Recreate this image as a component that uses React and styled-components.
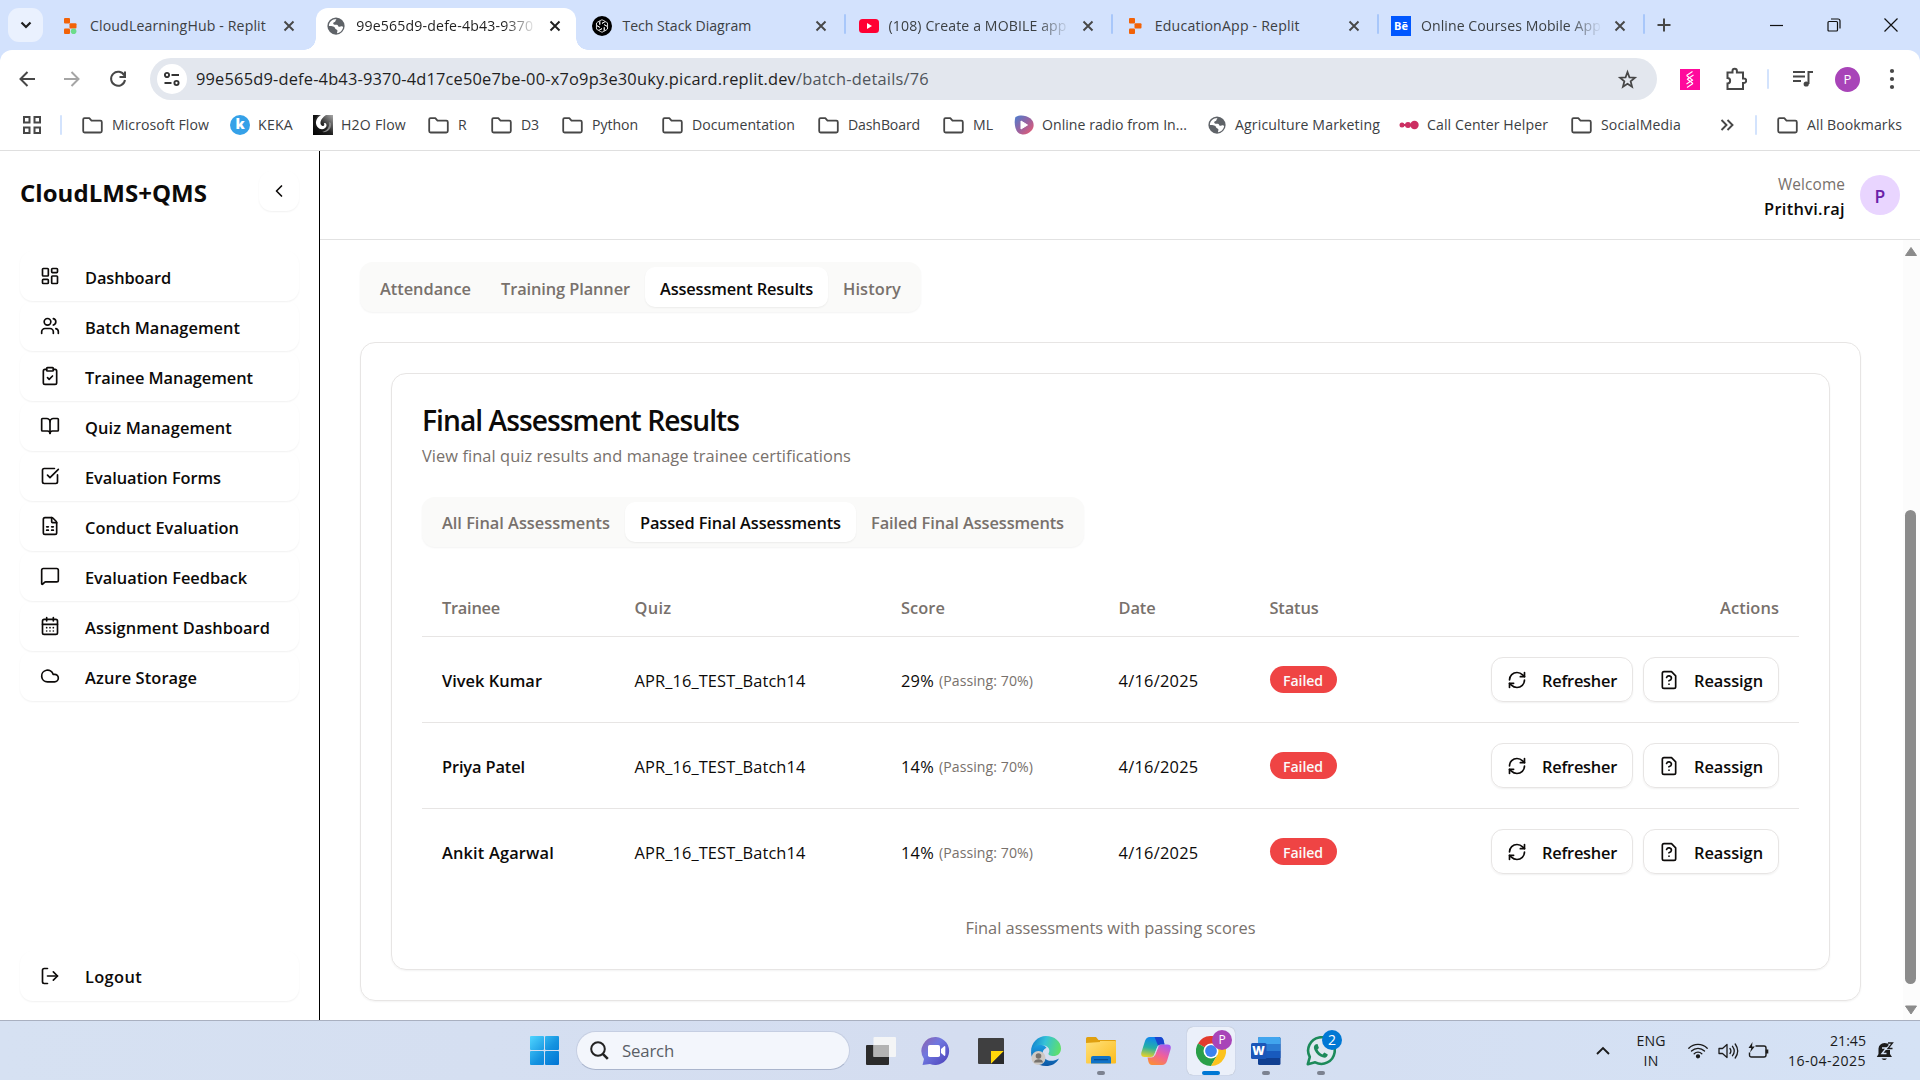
import React, { useLayoutEffect, useRef } from "react";
import styled, { createGlobalStyle, css } from "styled-components";
import {
  LayoutDashboard, Users, ClipboardCheck, BookOpen, SquareCheckBig, FileSpreadsheet,
  MessageSquare, CalendarDays, Cloud, LogOut, RefreshCw, ChevronLeft,
} from "lucide-react";

const Global = createGlobalStyle`
  * { box-sizing: border-box; }
  html, body { margin: 0; padding: 0; overflow: hidden; background: #fff; }
  body { font-family: "Open Sans", "Noto Sans", sans-serif; color: #0c0a09; }
  svg { display: block; flex: none; }
`;

/* Text whose tracking is tuned so that it fills a given width. */
const TextBox = styled.span`
  display: inline-block;
  white-space: pre;
  font-size: ${(p) => p.$size}px;
  font-weight: ${(p) => p.$weight};
  color: ${(p) => p.$color};
  line-height: ${(p) => p.$lh}px;
  flex: none;
`;

function T({ w, size = 16.4, weight = 400, color = "inherit", lh = 24, children, className }) {
  const ref = useRef(null);
  useLayoutEffect(() => {
    const el = ref.current;
    if (!w || !el) return;
    el.style.letterSpacing = "0px";
    const natural = el.getBoundingClientRect().width;
    const spacing = (w - natural) / el.textContent.length;
    el.style.letterSpacing = `${spacing.toFixed(3)}px`;
  }, [w, children]);
  return (
    <TextBox ref={ref} className={className} $size={size} $weight={weight} $color={color} $lh={lh}>
      {children}
    </TextBox>
  );
}

const Screen = styled.div`
  width: 1920px;
  height: 1080px;
  display: flex;
  flex-direction: column;
  overflow: hidden;
`;

/* ---------- browser tab strip ---------- */
const TabStrip = styled.div`
  height: 50px;
  background: #d3e2fd;
  display: flex;
  align-items: flex-start;
  padding: 8px 0 0 8px;
`;
const TabSearch = styled.div`
  width: 35px;
  height: 34px;
  border-radius: 11px;
  background: #eaf1fe;
  display: grid;
  place-items: center;
  margin-right: 7px;
`;
const TabSlot = styled.div`
  width: 266.2px;
  height: 42px;
  display: flex;
  align-items: flex-start;
`;
const TabBody = styled.div`
  position: relative;
  width: 260px;
  height: 42px;
  display: flex;
  align-items: center;
  padding: 0 0 7px 10px;
  border-radius: 12px 12px 0 0;
  ${(p) => p.$active && css`
    background: #fff;
    &::before, &::after {
      content: "";
      position: absolute;
      bottom: 0;
      width: 12px;
      height: 12px;
    }
    &::before { left: -12px; background: radial-gradient(circle at 0 0, transparent 11.5px, #fff 12px); }
    &::after { right: -12px; background: radial-gradient(circle at 100% 0, transparent 11.5px, #fff 12px); }
  `}
`;
const Fav = styled.div`
  width: 20px;
  height: 20px;
  display: grid;
  place-items: center;
  margin-right: ${(p) => p.$gap ?? 10}px;
  flex: none;
`;
const TabTitle = styled.div`
  width: 180px;
  margin-right: 13px;
  height: 24px;
  color: ${(p) => (p.$active ? "#1f1f1f" : "#3c4043")};
  ${(p) => p.$fade && css`mask-image: linear-gradient(90deg, #000 148px, transparent 181px);`}
`;
const TabSep = styled.div`
  width: 2px;
  height: 20px;
  margin: 6px 0 0 2px;
  border-radius: 1px;
  background: #a8c7fa;
`;
const NewTab = styled.div`
  width: 34px;
  height: 34px;
  display: grid;
  place-items: center;
`;
const WindowButtons = styled.div`
  margin-left: auto;
  display: flex;
  height: 34px;
  align-items: center;
  padding-right: 1px;
`;
const WinBtn = styled.div`
  width: 57px;
  display: grid;
  place-items: center;
`;

/* ---------- toolbar ---------- */
const ToolbarBack = styled.div`
  background: #d3e2fd;
  height: 58px;
`;
const Toolbar = styled.div`
  background: #fff;
  height: 58px;
  border-radius: 12px 12px 0 0;
  display: flex;
  align-items: center;
  padding-left: 17px;
`;
const ToolIcon = styled.div`
  width: ${(p) => p.$w ?? 20}px;
  margin-right: ${(p) => p.$mr ?? 0}px;
  display: grid;
  place-items: center;
  flex: none;
`;
const Omnibox = styled.div`
  width: 1507px;
  height: 42px;
  border-radius: 21px;
  background: #e3e7ee;
  display: flex;
  align-items: center;
  padding: 0 19px 0 7px;
`;
const SiteInfo = styled.div`
  width: 30px;
  height: 30px;
  border-radius: 50%;
  background: #fff;
  display: grid;
  place-items: center;
  margin-right: 9px;
`;
const Push = styled.div`
  flex: 1;
`;
const Divider = styled.div`
  width: 2px;
  height: 20px;
  border-radius: 1px;
  background: #d3e3fd;
  margin-right: ${(p) => p.$mr ?? 0}px;
`;
const Extension = styled.div`
  margin-left: 23px;
`;
const Profile = styled.div`
  width: 25px;
  height: 25px;
  border-radius: 50%;
  background: #a844b8;
  color: #fff;
  display: grid;
  place-items: center;
  margin-right: 20px;
`;

/* ---------- bookmarks ---------- */
const Bookmarks = styled.div`
  height: 43px;
  display: flex;
  align-items: center;
  padding: 0 0 8px 22px;
  border-bottom: 1px solid #dfdfdf;
  background: #fff;
  color: #3c4043;
`;
const Bookmark = styled.div`
  width: ${(p) => p.$w}px;
  display: flex;
  align-items: center;
  flex: none;
  white-space: nowrap;
`;
const Keka = styled.div`
  width: 20px;
  height: 20px;
  border-radius: 50%;
  background: #35a1e8;
  color: #fff;
  font-size: 14px;
  font-weight: 800;
  line-height: 18px;
  text-align: center;
`;
const Behance = styled.div`
  width: 20px;
  height: 20px;
  background: #0057ff;
  color: #fff;
  font-size: 11px;
  font-weight: 700;
  line-height: 20px;
  text-align: center;
`;

/* ---------- application ---------- */
const AppArea = styled.div`
  height: 869px;
  display: flex;
  background: #fff;
  ${TextBox} { padding-top: 2px; }
`;
const Sidebar = styled.aside`
  width: 320px;
  border-right: 1.5px solid #000;
  padding: 20px 20px 19px;
  display: flex;
  flex-direction: column;
`;
const SideHead = styled.div`
  display: flex;
  justify-content: space-between;
  width: 279px;
  height: 80px;
`;
const Brand = styled.div`
  padding-top: 3px;
`;
const SoftBox = css`
  border-radius: 13px;
  box-shadow: 0 1px 2px rgba(0, 0, 0, 0.06);
`;
const Collapse = styled.div`
  ${SoftBox}
  width: 40px;
  height: 40px;
  display: grid;
  place-items: center;
`;
const NavItem = styled.div`
  ${SoftBox}
  width: 279px;
  height: 50px;
  flex: none;
  display: flex;
  align-items: center;
  padding-left: 20px;
  svg { margin: 0 25px 0 0; }
  ${TextBox} { padding-top: 4px; }
`;
const LogoutItem = styled(NavItem)`
  svg { margin-bottom: 1px; }
  ${TextBox} { padding-top: 2px; }
`;
const Main = styled.main`
  flex: 1;
  display: flex;
  flex-direction: column;
`;
const TopBar = styled.header`
  height: 89px;
  border-bottom: 1px solid #e2e2e2;
  display: flex;
  justify-content: flex-end;
  align-items: center;
  padding-right: 20px;
  gap: 15px;
`;
const Who = styled.div`
  display: flex;
  flex-direction: column;
  align-items: flex-end;
`;
const Avatar = styled.div`
  width: 40px;
  height: 40px;
  border-radius: 50%;
  background: #e9d5ff;
  display: grid;
  place-items: center;
`;
const Body = styled.div`
  flex: 1;
  display: flex;
`;
const Content = styled.div`
  width: 1583px;
  padding: 22px 0 0 40px;
`;
const Scroll = styled.div`
  width: 17px;
  background: #fcfcfc;
  display: flex;
  flex-direction: column;
  align-items: center;
  padding: 7px 2px 4px 0;
`;
const Thumb = styled.div`
  width: 11px;
  height: 474px;
  border-radius: 6px;
  background: #8b8b8b;
  margin: 254px 0 21px;
`;
const Segments = styled.div`
  display: inline-flex;
  flex: none;
  height: 50px;
  padding: 5px;
  border-radius: 13px;
  background: #fafaf9;
  box-shadow: 0 1px 2px rgba(0, 0, 0, 0.05);
  vertical-align: top;
  ${TextBox} { padding-top: ${(p) => p.$drop ?? 2}px; }
`;
const Segment = styled.div`
  height: 40px;
  padding: 0 15px;
  display: flex;
  align-items: center;
  border-radius: 10px;
  color: ${(p) => (p.$active ? "#0c0a09" : "#78716c")};
  ${(p) => p.$active && css`
    background: #fff;
    box-shadow: 0 1px 2px rgba(0, 0, 0, 0.06);
  `}
`;
const Card = styled.section`
  width: ${(p) => p.$w}px;
  height: ${(p) => p.$h}px;
  margin-top: ${(p) => p.$mt ?? 0}px;
  border: 1px solid #e7e5e4;
  border-radius: 15px;
  padding: 30px;
  box-shadow: 0 1px 2px rgba(0, 0, 0, 0.05);
  display: flex;
  flex-direction: column;
  align-items: flex-start;
  flex: none;
`;
const Title = styled.div`
  height: 39px;
  flex: none;
`;
const Subtitle = styled.div`
  height: 54px;
  flex: none;
`;
const Row = styled.div`
  width: 1377px;
  height: ${(p) => p.$h}px;
  flex: none;
  display: grid;
  grid-template-columns: 192.5px 266.5px 217.5px 151px 1fr auto;
  align-items: center;
  padding: 0 20px;
  border-bottom: ${(p) => (p.$last ? "0" : "1px solid #e7e5e4")};
  margin-top: ${(p) => p.$mt ?? 0}px;
`;
const Cell = styled.div`
  display: flex;
  align-items: center;
  gap: ${(p) => p.$gap ?? 5}px;
`;
const Badge = styled.div`
  width: 67px;
  height: 27px;
  border-radius: 14px;
  background: #ef4444;
  color: #fafaf9;
  display: flex;
  justify-content: center;
  align-items: center;
`;
const Action = styled.div`
  width: ${(p) => p.$w}px;
  height: 45px;
  border: 1px solid #e7e5e4;
  border-radius: 12px;
  box-shadow: 0 1px 2px rgba(0, 0, 0, 0.06);
  display: flex;
  align-items: center;
  padding-left: 15px;
  gap: 15px;
`;
const Caption = styled.div`
  width: 100%;
  margin-top: 20px;
  flex: none;
  display: flex;
  justify-content: center;
`;

/* ---------- taskbar ---------- */
const Taskbar = styled.div`
  height: 60px;
  border-top: 1px solid #a9b0c0;
  background: linear-gradient(90deg, #d6e1f2, #d4ddf0 50%, #d5e2f5);
  display: flex;
  align-items: center;
  padding-left: 530px;
`;
const SearchBox = styled.div`
  width: 274px;
  height: 39px;
  border-radius: 20px;
  background: #f3f6fc;
  border: 1px solid #c5cee2;
  border-bottom-color: #aab5cd;
  display: flex;
  align-items: center;
  padding-left: 13px;
  gap: 13px;
  margin: 0 7px 0 17px;
`;
const TaskItem = styled.div`
  position: relative;
  width: 48px;
  height: 48px;
  margin-right: 7px;
  display: grid;
  place-items: center;
  border-radius: 6px;
  ${(p) => p.$active && css`background: #ebf0fa; box-shadow: 0 0 1px rgba(0, 0, 0, 0.3);`}
`;
const Running = styled.div`
  position: absolute;
  bottom: 0;
  left: ${(p) => (p.$wide ? 15 : 20)}px;
  width: ${(p) => (p.$wide ? 18 : 8)}px;
  height: 4px;
  border-radius: 2px;
  background: ${(p) => (p.$wide ? "#0078d4" : "#7c8290")};
`;
const Bubble = styled.div`
  position: absolute;
  top: 3px;
  right: 3px;
  width: 20px;
  height: 20px;
  border-radius: 50%;
  background: ${(p) => p.$bg};
  color: #fff;
  font-size: ${(p) => p.$fs}px;
  line-height: 20px;
  text-align: center;
`;
const Tray = styled.div`
  margin-left: auto;
  display: flex;
  align-items: center;
  color: #1b1b1b;
  padding-right: 20px;
`;
const Stack = styled.div`
  width: ${(p) => p.$w}px;
  margin-right: ${(p) => p.$mr}px;
  display: flex;
  flex-direction: column;
  align-items: ${(p) => p.$align};
`;
const TrayIcon = styled.div`
  width: 30px;
  margin-right: ${(p) => p.$mr ?? 0}px;
  display: grid;
  place-items: center;
`;

/* ---------- drawings ---------- */
const Cross = ({ c = "#474747" }) => (
  <svg width="12" height="12" viewBox="0 0 12 12" stroke={c} strokeWidth="1.9"><path d="M1.5 1.5l9 9M10.5 1.5l-9 9" /></svg>
);
const Replit = ({ green }) => (
  <svg width="20" height="20" viewBox="0 0 20 20" fill="#f26207">
    <rect x="4" y="2" width="6" height="5.6" rx="1" /><rect x="9.5" y="7.2" width="7" height="5.4" rx="1" />
    <rect x="4" y="12.4" width="6" height="5.6" rx="1" />
    {green && <circle cx="13.6" cy="15.3" r="2.8" fill="#6bdc8b" />}
  </svg>
);
const Globe = () => (
  <svg width="18" height="18" viewBox="0 0 24 24">
    <circle cx="12" cy="12" r="11.5" fill="#5f6368" />
    <path fill="#fff" d="M13 2.5c-2 1.5-1 3.5-3.500 4.500-2 .8-1.500 3 .5 3.200 2.200.2 4.200-.4 4.700 1.500.3 1.500 2 1.500 3.300 1 1.500-.7 3-.3 3.500.5C21 17.500 17.500 21 13.500 21.700c-.5-1.500.8-2.200.3-4-.5-1.500-3-1.200-3.200-3.200-.2-2-3.600-2.500-8-2.500C2.300 7 6.500 2.500 13 2.500z" />
    <path fill="#5f6368" d="M12 3.500c3-1 8 2 9 6.500-1.500-1.500-3 .5-4.500-.5-1.300-1-1-2.500-2.500-3-1.500-.3-2.500-1.500-2-3z" />
  </svg>
);
const OpenAI = () => (
  <svg width="20" height="20" viewBox="0 0 20 20">
    <circle cx="10" cy="10" r="10" fill="#000" />
    <g fill="none" stroke="#fff" strokeWidth="0.85" transform="translate(10 10) scale(.93) translate(-10 -10)">
      {[0, 60, 120, 180, 240, 300].map((a) => (
        <path key={a} transform={`rotate(${a} 10 10)`} d="M7.600 8.600V5.700a2.300 2.300 0 0 1 3.600-1.900l2.600 1.500M10 7.200l2.600-1.500" />
      ))}
    </g>
  </svg>
);
const YouTube = () => (
  <svg width="20" height="16" viewBox="0 0 20 16"><rect y="1" width="20" height="14" rx="3.500" fill="#ff0033" /><path d="M8 5l5 3-5 3z" fill="#fff" /></svg>
);
const Folder = () => (
  <svg width="21" height="17" viewBox="0 0 21 17" fill="none" stroke="#474747" strokeWidth="1.800" strokeLinejoin="round">
    <path d="M1.200 2.500q0-1.300 1.300-1.300h4.800l2.200 2.400h8.800q1.500 0 1.500 1.400v9q0 1.500-1.500 1.500H2.600q-1.400 0-1.400-1.500z" />
  </svg>
);
const H2O = () => (
  <svg width="20" height="20" viewBox="0 0 20 20">
    <defs><linearGradient id="h2o" x1="0" x2="1" y1="1" y2="0"><stop stopColor="#000" /><stop offset=".5" stopColor="#222" /><stop offset="1" stopColor="#aaa" /></linearGradient></defs>
    <rect width="20" height="20" fill="url(#h2o)" />
    <path d="M8 0C3 3 1.500 8 4.500 12c3 3.500 8 2.500 9-1 .3-2.500-1.500-3.500-2.500-2.500.8 1.500 0 3-1.500 2.500C6 9.500 7 4 13 0z" fill="#fff" />
    <path d="M0 0h6C2 2 0 6 0 9z" fill="#111" /><path d="M16 7c1 5-2 9-7 10 5 1 10-3 9-9z" fill="#888" />
  </svg>
);
const Radio = () => (
  <svg width="20" height="20" viewBox="0 0 20 20">
    <defs><linearGradient id="rad" x1="0" x2="1" y1="0" y2="1"><stop stopColor="#4a7fd0" /><stop offset=".5" stopColor="#9a62a0" /><stop offset="1" stopColor="#f25a6b" /></linearGradient></defs>
    <path d="M1.500 2C5-.3 12-.2 16.500 3.500c4 3.500 4 8.500 1 12C13.500 20 8.500 20.500 4.500 18 .5 15 0 6 1.500 2z" fill="url(#rad)" /><path d="M7 6v8l6.500-4z" fill="#fff" stroke="#fff" strokeLinejoin="round" />
  </svg>
);
const CallCenter = () => (
  <svg width="20" height="20" viewBox="0 0 20 20" fill="#cc2f62"><circle cx="3" cy="10" r="2.500" /><circle cx="9" cy="10" r="3" /><circle cx="15.500" cy="10" r="4.200" /><rect x="3" y="9" width="12" height="2" /></svg>
);
const FileQuestion = () => (
  <svg width="20" height="20" viewBox="0 0 24 24" fill="none" stroke="currentColor" strokeWidth="2" strokeLinecap="round" strokeLinejoin="round">
    <path d="M12 17h.01" /><path d="M15 2H6a2 2 0 0 0-2 2v16a2 2 0 0 0 2 2h12a2 2 0 0 0 2-2V7z" /><path d="M9.100 9a3 3 0 0 1 5.820 1c0 2-3 3-3 3" />
  </svg>
);
const Stroke = ({ w = 20, h = 20, sw = 2, c = "#474747", d, vb }) => (
  <svg width={w} height={h} viewBox={vb ?? `0 0 ${w} ${h}`} fill="none" stroke={c} strokeWidth={sw}><path d={d} /></svg>
);
const WinLogo = () => (
  <svg width="29" height="29" viewBox="0 0 29 29">
    <defs><linearGradient id="win" x1="0" y1="0" x2="29" y2="29" gradientUnits="userSpaceOnUse"><stop stopColor="#4fd5ff" /><stop offset=".55" stopColor="#1593e0" /><stop offset="1" stopColor="#0074d4" /></linearGradient></defs>
    <g fill="url(#win)"><rect width="14" height="14" rx="1" /><rect x="15" width="14" height="14" rx="1" /><rect y="15" width="14" height="14" rx="1" /><rect x="15" y="15" width="14" height="14" rx="1" /></g>
  </svg>
);
const TaskView = () => (
  <svg width="30" height="28" viewBox="0 0 30 28"><rect y="8" width="23" height="20" rx="1" fill="#2b2b2b" /><rect x="7.500" y="0" width="22.500" height="20" rx="1" fill="#f5f5f5" opacity=".95" /><rect x="7.500" y="8" width="15.500" height="12" fill="#b3b3b3" /></svg>
);
const Chat = () => (
  <svg width="30" height="30" viewBox="0 0 30 30">
    <defs><linearGradient id="chat" x1="0" x2="1" y1="0" y2="1"><stop stopColor="#9161a9" /><stop offset=".4" stopColor="#7078e0" /><stop offset="1" stopColor="#4b3fb8" /></linearGradient></defs>
    <path d="M15 1a14 14 0 1 1-6 27l-7.500 1 1.500-6A14 14 0 0 1 15 1z" fill="url(#chat)" />
    <rect x="7" y="9" width="12" height="12" rx="1.800" fill="#fff" /><path d="M20 13l3.500-3q.8 0 .8 1v8q0 1-.8 1L20 17z" fill="#fff" />
  </svg>
);
const Sticky = () => (
  <svg width="26" height="26" viewBox="0 0 26 26"><rect width="26" height="26" rx="1" fill="#3f3f40" /><path d="M13 26V13h13z" fill="#ffd60a" /><path d="M13 26L26 13v13z" fill="#29292b" /></svg>
);
const Edge = () => (
  <svg width="30" height="30" viewBox="0 0 30 30">
    <defs>
      <linearGradient id="edge1" x1="0" x2="1" y1=".3" y2=".5"><stop stopColor="#0f7fce" /><stop offset=".45" stopColor="#35c1d8" /><stop offset="1" stopColor="#5fe06a" /></linearGradient>
      <linearGradient id="edge2" x1="0" x2="0" y1="0" y2="1"><stop stopColor="#1b9de2" /><stop offset="1" stopColor="#0c56a4" /></linearGradient>
    </defs>
    <path d="M15 0c8.500 0 15 5.500 15 12.500 0 5-3.500 7.500-7.500 7.500-3.500 0-5.500-1.200-5-2.500 2-3 .5-7.500-5-8C7 9 2 12 0 16 0 6.500 7 0 15 0z" fill="url(#edge1)" />
    <path d="M0 16C1.500 10.500 6 8.500 10.500 9c3.500.4 5 2.500 5 3-4 1-5 6-2.500 9.500 3 4 9 4.500 15 1-2.500 5-7.500 7.500-13 7.500C6.500 30 0 24 0 16z" fill="url(#edge2)" />
    <circle cx="7.500" cy="22" r="7" fill="#cfcac5" /><circle cx="7.500" cy="20" r="2.800" fill="#77726d" /><path d="M3 26.500c0-4.500 9-4.500 9 0z" fill="#77726d" />
  </svg>
);
const Explorer = () => (
  <svg width="30" height="27" viewBox="0 0 30 27">
    <defs><linearGradient id="exp" x1="0" x2="1" y1="0" y2="1"><stop stopColor="#ffe07a" /><stop offset="1" stopColor="#fcbc1d" /></linearGradient></defs>
    <path d="M0 1.500Q0 0 1.500 0H10l2.500 3H29q1 0 1 1v6H0z" fill="#e0a010" /><rect y="4" width="30" height="22.500" rx="1" fill="url(#exp)" />
    <path d="M0 6V3.800h12L14 3v2z" fill="#e0a010" />
    <path d="M5 26.500V21q0-2 2-2h16q2 0 2 2v5.500z" fill="#1173c7" /><rect x="8" y="22" width="14" height="1.300" fill="#0a4f93" />
  </svg>
);
const Copilot = () => (
  <svg width="30" height="28" viewBox="0 0 30 28">
    <defs>
      <linearGradient id="cp1" x1=".3" x2=".1" y1="0" y2="1"><stop stopColor="#0e86ee" /><stop offset=".5" stopColor="#25b0a4" /><stop offset="1" stopColor="#f4d31f" /></linearGradient>
      <linearGradient id="cp2" x1=".8" x2=".3" y1="0" y2="1"><stop stopColor="#a45cf2" /><stop offset=".5" stopColor="#f0609b" /><stop offset="1" stopColor="#fb8c3c" /></linearGradient>
    </defs>
    <path d="M9 0h10q2.500 0 3.500 3l1 4.500h-4q-2.500 0-3.300 2.500L13 18q-.8 2-3 2H3.500Q-.8 20 .5 15L4 4Q5.300 0 9 0z" fill="url(#cp1)" />
    <path d="M13.500 0H19q2.500 0 3.500 3l1 4.500h-4q-1.500 0-2.500 1z" fill="#1a44cf" />
    <path d="M21 28H11q-2.500 0-3.500-3l-1-4.500h4q2.500 0 3.300-2.500L17 10q.8-2.500 3-2.500h6.500q4.300 0 3 5L26 24q-1.300 4-5 4z" fill="url(#cp2)" />
    <path d="M16.500 9.500l-3.300 9h.8l3.600-9z" fill="#d4ddf0" />
  </svg>
);
const Chrome = () => (
  <svg width="30" height="30" viewBox="0 0 30 30">
    <path d="M15 15L2 7.500A15 15 0 0 1 28 7.500z" fill="#e33b2e" /><path d="M15 15V0a15 15 0 0 1 13 7.500H15z" fill="#e33b2e" />
    <path d="M15 15L2 7.500A15 15 0 0 0 15 30l6.500-11.250z" fill="#2a9f48" /><path d="M15 7.500h13A15 15 0 0 1 15 30l6.500-11.250z" fill="#fcc31e" />
    <circle cx="15" cy="15" r="7.500" fill="#fff" /><circle cx="15" cy="15" r="5.900" fill="#3b82f0" />
  </svg>
);
const Word = () => (
  <svg width="30" height="28" viewBox="0 0 30 28">
    <rect x="7" width="22.500" height="28" rx="1.500" fill="#103f91" /><path d="M7 1.500Q7 0 8.500 0H28q1.500 0 1.500 1.500V7H7z" fill="#41a5ee" /><rect x="7" y="7" width="22.500" height="7" fill="#2b7cd3" /><rect x="7" y="14" width="22.500" height="7" fill="#185abd" />
    <rect y="6" width="15.500" height="16" rx="1.500" fill="#1a56b8" />
    <text x="7.600" y="18.300" fontSize="12" fontWeight="800" fill="#fff" textAnchor="middle" fontFamily="Open Sans">W</text>
  </svg>
);
const WhatsApp = () => (
  <svg width="30" height="30" viewBox="0 0 30 30">
    <path d="M1.800 28.200l2-7.200A13.300 13.300 0 1 1 9.200 26.300z" fill="#dfe8f0" stroke="#1c8a5a" strokeWidth="2.600" strokeLinejoin="round" />
    <path d="M10 8.200c-2 .8-2.800 3-1.500 5.800 1.800 4 5 6.600 8.800 7.600 2.500.6 4.200-.8 4.500-3l-3.500-2-1.800 1.800c-2.500-1-4.200-2.800-5-4.800l1.400-1.700L11.500 8z" fill="#1c8a5a" />
  </svg>
);

/* ---------- data ---------- */
const tabs = [
  { icon: <Replit green />, title: "CloudLearningHub - Replit", w: 176 },
  { icon: <Globe />, title: "99e565d9-defe-4b43-9370", w: 177, active: true, fade: true },
  { icon: <OpenAI />, title: "Tech Stack Diagram", w: 129, sep: true },
  { icon: <YouTube />, title: "(108) Create a MOBILE app", w: 178, fade: true, sep: true },
  { icon: <Replit />, title: "EducationApp - Replit", w: 145, sep: true },
  { icon: <Behance>Bē</Behance>, title: "Online Courses Mobile App", w: 180, fade: true, sep: true },
];
const bookmarks = [
  ["Microsoft Flow", 97, 148], ["KEKA", 35, 83, <Keka>k</Keka>], ["H2O Flow", 65, 115, <H2O />], ["R", 9, 63],
  ["D3", 18, 71], ["Python", 46, 100], ["Documentation", 103, 156], ["DashBoard", 72, 125], ["ML", 20, 71],
  ["Online radio from In...", 145, 193, <Radio />], ["Agriculture Marketing", 145, 192, <Globe />],
  ["Call Center Helper", 121, 172, <CallCenter />], ["SocialMedia", 80, 148],
];
const nav = [
  [LayoutDashboard, "Dashboard", 86], [Users, "Batch Management", 155], [ClipboardCheck, "Trainee Management", 168],
  [BookOpen, "Quiz Management", 147], [SquareCheckBig, "Evaluation Forms", 136], [FileSpreadsheet, "Conduct Evaluation", 154],
  [MessageSquare, "Evaluation Feedback", 162], [CalendarDays, "Assignment Dashboard", 185], [Cloud, "Azure Storage", 112],
];
const mainTabs = [["Attendance", 91], ["Training Planner", 129], ["Assessment Results", 153, true], ["History", 58]];
const resultTabs = [["All Final Assessments", 168], ["Passed Final Assessments", 201, true], ["Failed Final Assessments", 193]];
const rows = [["Vivek Kumar", 100, "29%"], ["Priya Patel", 83, "14%"], ["Ankit Agarwal", 112, "14%"]];

const Segmented = ({ items, drop }) => (
  <Segments $drop={drop}>
    {items.map(([label, w, active]) => (
      <Segment key={label} $active={active}><T w={w} weight={550}>{label}</T></Segment>
    ))}
  </Segments>
);

export default function App() {
  return (
    <Screen>
      <Global />
      <TabStrip>
        <TabSearch><Stroke w={12} h={12} sw={2.2} c="#1f1f1f" d="M1.500 3.500L6 8l4.500-4.500" /></TabSearch>
        {tabs.map((t) => (
          <TabSlot key={t.title}>
            <TabBody $active={t.active}>
              <Fav>{t.icon}</Fav>
              <TabTitle $active={t.active} $fade={t.fade}><T w={t.w} size={14.1}>{t.title}</T></TabTitle>
              <Cross c={t.active ? "#1f1f1f" : "#474747"} />
            </TabBody>
            {t.sep && <TabSep />}
          </TabSlot>
        ))}
        <NewTab><Stroke w={14} h={14} d="M7 .5v13M.5 7h13" /></NewTab>
        <WindowButtons>
          <WinBtn><Stroke w={13} h={13} sw={1.2} c="#111" d="M0 6.500h13" /></WinBtn>
          <WinBtn><Stroke w={14} h={14} sw={1.200} c="#111" d="M1 4.500q0-1 1-1h7.500q1 0 1 1V12q0 1-1 1H2q-1 0-1-1zM4 1h7q2 0 2 2v7.500" /></WinBtn>
          <WinBtn><Stroke w={14} h={14} sw={1.200} c="#111" d="M.5.5l13 13M13.500.5l-13 13" /></WinBtn>
        </WindowButtons>
      </TabStrip>

      <ToolbarBack>
        <Toolbar>
          <ToolIcon $mr={25}><Stroke w={18} h={18} d="M9.500 2L2.500 9l7 7M2.500 9H17" /></ToolIcon>
          <ToolIcon $mr={26}><Stroke w={18} h={18} c="#a5a5a5" d="M8.500 2l7 7-7 7M15.500 9H1" /></ToolIcon>
          <ToolIcon $mr={22}><Stroke w={18} h={18} d="M15.300 5.500A7 7 0 1 0 16 10M16 1.500V7h-5.500" /></ToolIcon>
          <Omnibox>
            <SiteInfo>
              <svg width="18" height="16" viewBox="0 0 18 16" fill="none" stroke="#333" strokeWidth="1.900"><circle cx="4" cy="4" r="2.100" /><path d="M8.500 4H16M1.500 12h7" /><circle cx="13.500" cy="12" r="2.100" /></svg>
            </SiteInfo>
            <T w={600} color="#1f1f1f" lh={26}>99e565d9-defe-4b43-9370-4d17ce50e7be-00-x7o9p3e30uky.picard.replit.dev</T>
            <T w={133} color="#50555b" lh={26}>/batch-details/76</T>
            <Push />
            <Stroke w={21} h={21} vb="0 0 24 24" d="M12 3.500l2.200 6 6.300.4-4.900 4.100 1.600 6.200L12 16.800l-5.200 3.400L8.400 14 3.500 9.900l6.300-.4z" />
          </Omnibox>
          <Extension>
            <svg width="20" height="21" viewBox="0 0 20 21"><rect width="20" height="21" fill="#ff0a9c" /><path d="M12.500 2.500l-6 4M13.500 6l-6 4M6.500 6.500l6.500 5M7 10l6 4.500M12.500 11l-6 4M13 14.500l-6 4" stroke="#fff" strokeWidth="1.100" fill="none" /></svg>
          </Extension>
          <Push />
          <ToolIcon $w={22} $mr={20}>
            <Stroke w={22} h={24} d="M2.500 5.500h5V4a2.200 2.200 0 0 1 4.400 0v1.500H18v6h1a2.200 2.200 0 0 1 0 4.400h-1V22H2.500v-5.500c3.500 0 3.500-5.500 0-5.500z" />
          </ToolIcon>
          <Divider $mr={24} />
          <ToolIcon $w={20} $mr={22}>
            <svg width="20" height="18" viewBox="0 0 20 18" fill="none" stroke="#474747" strokeWidth="2"><path d="M0 2h12M0 6.500h12M0 11h8M15.500 14V2H20" /><circle cx="13.200" cy="14" r="2.600" fill="#474747" stroke="none" /></svg>
          </ToolIcon>
          <Profile><T size={13} lh={25}>P</T></Profile>
          <ToolIcon $w={24} $mr={16}>
            <svg width="6" height="22" viewBox="0 0 6 22" fill="#474747"><circle cx="3" cy="3" r="2.100" /><circle cx="3" cy="11" r="2.100" /><circle cx="3" cy="19" r="2.100" /></svg>
          </ToolIcon>
        </Toolbar>
      </ToolbarBack>

      <Bookmarks>
        <ToolIcon $mr={18}>
          <Stroke w={18} h={18} d="M1 1h5.500v5.500H1zM11.500 1H17v5.500h-5.500zM1 11.500h5.500V17H1zM11.500 11.500H17V17h-5.500z" />
        </ToolIcon>
        <Divider $mr={20} />
        {bookmarks.map(([label, w, slot, icon]) => (
          <Bookmark key={label} $w={slot}>
            <Fav $gap={icon ? 8 : 10}>{icon ?? <Folder />}</Fav>
            <T w={w} size={14.1}>{label}</T>
          </Bookmark>
        ))}
        <ToolIcon $w={16} $mr={20}><Stroke w={14} h={12} sw={1.900} d="M1.500 1l5 5-5 5M7.500 1l5 5-5 5" /></ToolIcon>
        <Divider $mr={20} />
        <Bookmark $w={140}><Fav><Folder /></Fav><T w={95} size={14.1}>All Bookmarks</T></Bookmark>
      </Bookmarks>

      <AppArea>
        <Sidebar>
          <SideHead>
            <Brand><T w={187} size={24} weight={700} lh={34}>CloudLMS+QMS</T></Brand>
            <Collapse><ChevronLeft size={20} /></Collapse>
          </SideHead>
          {nav.map(([Icon, label, w]) => (
            <NavItem key={label}><Icon size={20} /><T w={w} weight={550}>{label}</T></NavItem>
          ))}
          <Push />
          <LogoutItem><LogOut size={20} /><T w={57} weight={550}>Logout</T></LogoutItem>
        </Sidebar>
        <Main>
          <TopBar>
            <Who>
              <T w={67} size={15.4} color="#78716c" lh={23}>Welcome</T>
              <T w={81} weight={550} lh={22}>Prithvi.raj</T>
            </Who>
            <Avatar><T size={17.5} weight={550} color="#6b21a8">P</T></Avatar>
          </TopBar>
          <Body>
            <Content>
              <Segmented items={mainTabs} drop={4} />
              <Card $w={1501} $h={659} $mt={30}>
                <Card $w={1439} $h={597}>
                  <Title><T w={317} size={28.200} weight={600} lh={28}>Final Assessment Results</T></Title>
                  <Subtitle><T w={429} color="#78716c" lh={22}>View final quiz results and manage trainee certifications</T></Subtitle>
                  <Segmented items={resultTabs} />
                  <Row $h={60} $mt={30}>
                    {[["Trainee", 58], ["Quiz", 37], ["Score", 44], ["Date", 37], ["Status", 49], ["Actions", 59]].map(([h, w]) => (
                      <Cell key={h}><T w={w} weight={550} color="#78716c">{h}</T></Cell>
                    ))}
                  </Row>
                  {rows.map(([name, w, score], i) => (
                    <Row key={name} $h={i === 2 ? 85 : 86} $last={i === 2}>
                      <Cell><T w={w} weight={550}>{name}</T></Cell>
                      <Cell><T w={171}>APR_16_TEST_Batch14</T></Cell>
                      <Cell><T w={33}>{score}</T><T w={94} size={14.1} lh={26} color="#78716c">(Passing: 70%)</T></Cell>
                      <Cell><T w={80}>4/16/2025</T></Cell>
                      <Cell><Badge><T w={40} size={14.1} weight={550}>Failed</T></Badge></Cell>
                      <Cell $gap={10}>
                        <Action $w={142}><RefreshCw size={20} /><T w={75} weight={550}>Refresher</T></Action>
                        <Action $w={136}><FileQuestion /><T w={69} weight={550}>Reassign</T></Action>
                      </Cell>
                    </Row>
                  ))}
                  <Caption><T w={290} color="#78716c">Final assessments with passing scores</T></Caption>
                </Card>
              </Card>
            </Content>
            <Scroll>
              <svg width="12" height="9" viewBox="0 0 12 9"><path d="M6 .5L11.500 8.500H.5z" fill="#8b8b8b" stroke="#8b8b8b" strokeLinejoin="round" /></svg>
              <Thumb />
              <svg width="12" height="10" viewBox="0 0 12 10"><path d="M6 9L11.500 1H.5z" fill="#8b8b8b" stroke="#8b8b8b" strokeLinejoin="round" /></svg>
            </Scroll>
          </Body>
        </Main>
      </AppArea>

      <Taskbar>
        <WinLogo />
        <SearchBox>
          <svg width="19" height="19" viewBox="0 0 19 19" fill="none" stroke="#222" strokeWidth="2"><circle cx="8" cy="8" r="6.800" /><path d="M12.800 12.800l5 5" strokeWidth="2.600" /></svg>
          <T w={52} size={16.8} color="#5a5e66">Search</T>
        </SearchBox>
        <TaskItem><TaskView /></TaskItem>
        <TaskItem><Chat /></TaskItem>
        <TaskItem><Sticky /></TaskItem>
        <TaskItem><Edge /></TaskItem>
        <TaskItem><Explorer /><Running /></TaskItem>
        <TaskItem><Copilot /></TaskItem>
        <TaskItem $active><Chrome /><Bubble $bg="#a844b8" $fs={12}>P</Bubble><Running $wide /></TaskItem>
        <TaskItem><Word /><Running /></TaskItem>
        <TaskItem><WhatsApp /><Bubble $bg="#0078d4" $fs={14}>2</Bubble><Running /></TaskItem>
        <Tray>
          <TrayIcon $mr={13}><Stroke w={14} h={10} sw={1.900} c="#1b1b1b" d="M1 8l6-6 6 6" /></TrayIcon>
          <Stack $w={40} $mr={12} $align="center">
            <T w={29} size={14.1} lh={20}>ENG</T>
            <T w={15} size={14.1} lh={20}>IN</T>
          </Stack>
          <TrayIcon>
            <svg width="20" height="17" viewBox="0 0 20 17" fill="none" stroke="#1b1b1b" strokeWidth="1.300" strokeLinecap="round"><path d="M.8 6.200a13 13 0 0 1 18.400 0M3.500 9a9.200 9.200 0 0 1 13 0M6.200 11.700a5.400 5.400 0 0 1 7.600 0" /><circle cx="10" cy="14.300" r="1.500" fill="#1b1b1b" /></svg>
          </TrayIcon>
          <TrayIcon>
            <svg width="21" height="18" viewBox="0 0 21 18" fill="none" stroke="#1b1b1b" strokeWidth="1.300" strokeLinecap="round" strokeLinejoin="round"><path d="M1 6.500h3.500L9 2.500v13l-4.500-4H1zM12 6.500q1.800 2.500 0 5M14.500 4.300q3.500 4.700 0 9.400M17.200 2q5 7 0 14" /></svg>
          </TrayIcon>
          <TrayIcon>
            <svg width="21" height="18" viewBox="0 0 21 18" fill="none" stroke="#1b1b1b" strokeWidth="1.400"><path d="M7.500 4H16q2 0 2 2v7q0 2-2 2H3.500q-2 0-2-2v-2.500" /><path d="M19 7.500v4" strokeWidth="2.600" /><path d="M4.500 0L.5 6h2.800L2 10.500 6.800 4.500H4z" fill="#1b1b1b" stroke="none" /></svg>
          </TrayIcon>
          <Stack $w={93} $mr={4} $align="flex-end">
            <T w={36} size={14.1} lh={20}>21:45</T>
            <T w={78} size={14.1} lh={19}>16-04-2025</T>
          </Stack>
          <TrayIcon>
            <svg width="18" height="20" viewBox="0 0 18 20" fill="#1b1b1b"><path d="M2.500 13V7.500Q3 2.500 8.500 2L14 3v10l2 3H.8zM5.500 17.500h5.500q-2.700 3-5.500 0z" /><path d="M6 7h4.500L6 12.500h4.500" stroke="#d5e2f5" strokeWidth="1.400" fill="none" /><path d="M12 2h4.500L12 7.500h4.500" stroke="#d5e2f5" strokeWidth="3.200" fill="none" /><path d="M12 2h4.500L12 7.500h4.500" stroke="#1b1b1b" strokeWidth="1.300" fill="none" /></svg>
          </TrayIcon>
        </Tray>
      </Taskbar>
    </Screen>
  );
}
